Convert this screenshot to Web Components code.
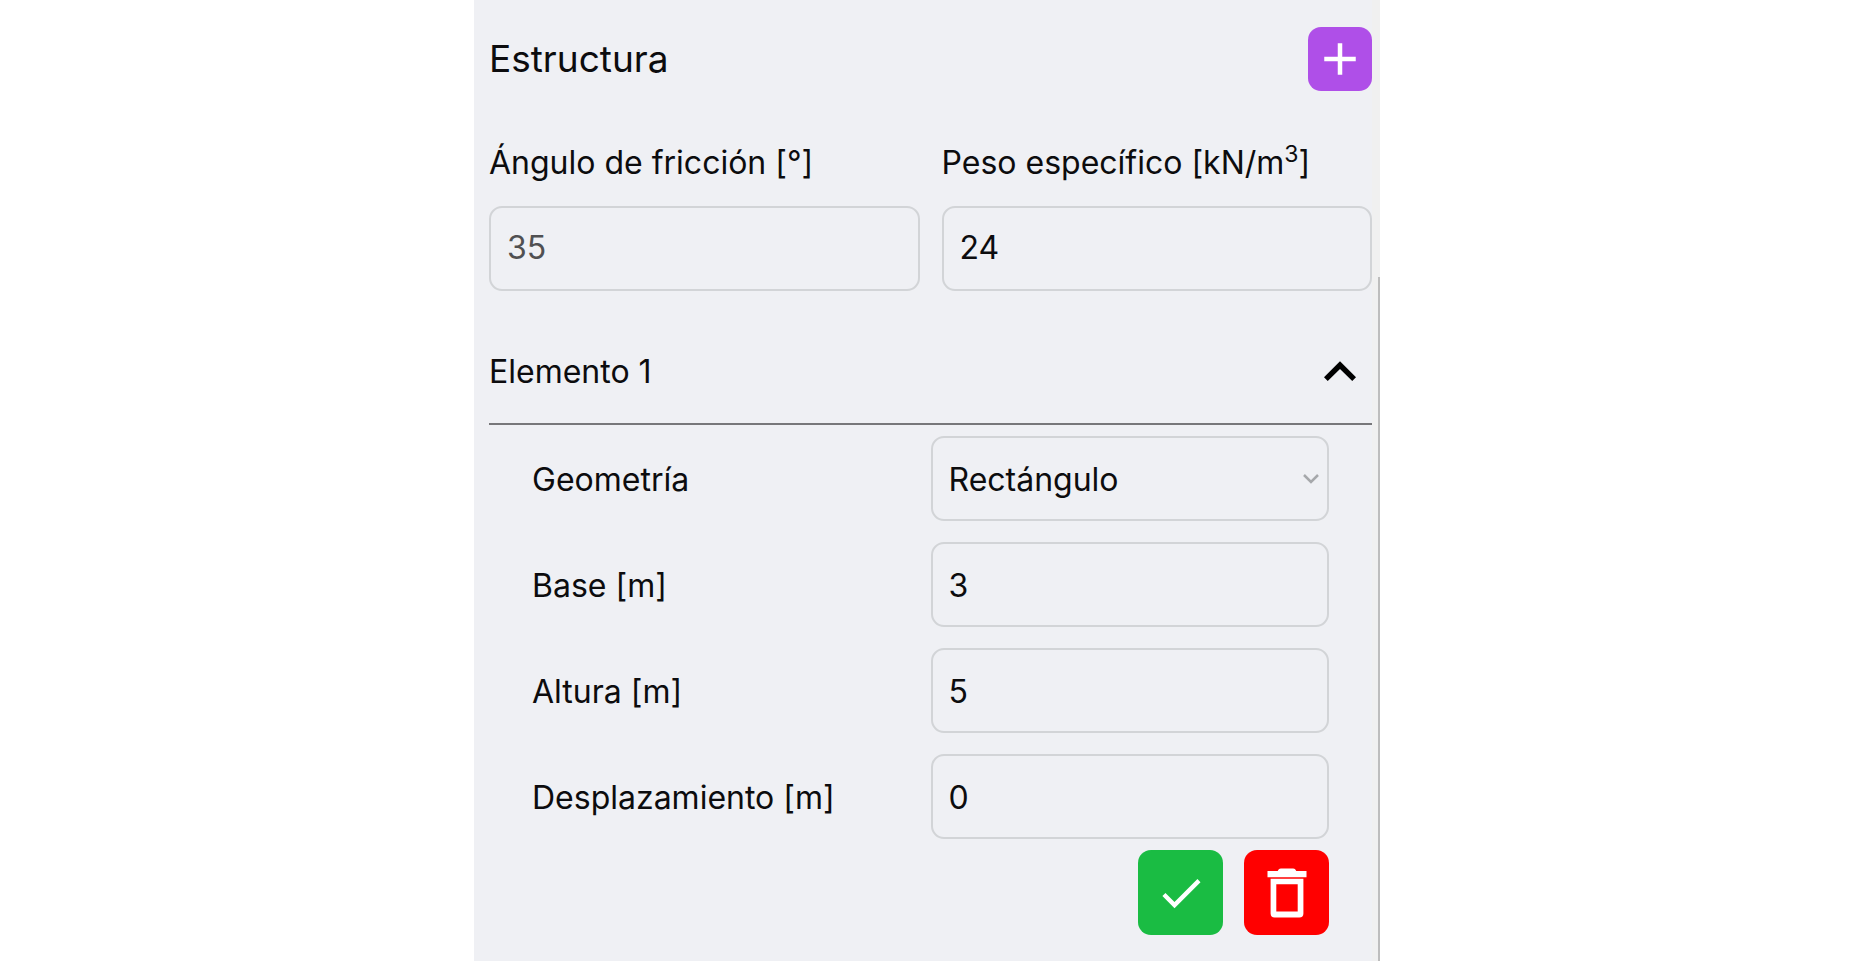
<!DOCTYPE html>
<html lang="es">
<head>
<meta charset="utf-8">
<meta name="viewport" content="width=device-width, initial-scale=1">
<title>Estructura</title>
<style>
  body { margin: 0; background: #fff; color: #0c0c0e; font-family: Inter, "Liberation Sans", sans-serif; font-size: 32px; line-height: 40px; }
</style>
</head>
<body>
<structure-panel></structure-panel>
<script>
const base = '*{box-sizing:border-box}button{font:inherit;color:inherit;border:0;padding:0;margin:0;cursor:pointer}';

const define = (name, html, setup) => customElements.define(name, class extends HTMLElement {
  constructor() {
    super();
    this.attachShadow({ mode: 'open' });
  }
  connectedCallback() {
    if (this.shadowRoot.childNodes.length) return;
    const t = document.createElement('template');
    t.innerHTML = html;
    this.shadowRoot.append(t.content.cloneNode(true));
    if (setup) setup(this, this.shadowRoot);
  }
});

const icons = {
  plus: '<svg width="54" height="54" viewBox="0 0 24 24"><path d="M19 13h-6v6h-2v-6H5v-2h6V5h2v6h6z"/></svg>',
  check: '<svg width="52" height="52" viewBox="0 0 24 24"><path d="M9 16.17 4.83 12l-1.42 1.41L9 19 21 7l-1.41-1.41z"/></svg>',
  trash: '<svg width="64" height="64" viewBox="0 0 64 64"><path d="M12.5 10h10.2c.8-1.7 1.7-2.500 3.200-2.500h12.200c1.500 0 2.400.8 3.200 2.500h10.200v6.200h-39z"/><path fill-rule="evenodd" d="M15.600 17.700h32.800V52.500a4 4 0 0 1-4 4H19.600a4 4 0 0 1-4-4zM21.300 23.200v27.200h21.400V23.200z"/></svg>'
};

/* Filled square button with an icon */
define('icon-button', `<style>${base}
  :host{display:block;flex:none;width:85px;height:85px}
  :host([size="small"]){width:64px;height:64px}
  button{display:grid;place-items:center;width:100%;height:100%;border-radius:13px;background:#af4fe8}
  :host([tone="ok"]) button{background:#1abc43}
  :host([tone="danger"]) button{background:#f00}
  svg{display:block;fill:#fff}
</style><button type="button"></button>`, (host, root) => {
  const b = root.querySelector('button');
  b.setAttribute('aria-label', host.getAttribute('label'));
  b.innerHTML = icons[host.getAttribute('icon')];
});

/* Labelled text box or drop-down; "inline" puts the label beside the control */
define('form-field', `<style>${base}
  :host{display:grid;row-gap:23px;min-width:0}
  :host([inline]){grid-template-columns:1fr 1fr;align-items:center}
  .box{display:grid;align-items:center;min-width:0}
  .box>*{grid-area:1/1}
  input,select{width:100%;height:85px;margin:0;padding:0 16px 2px;border:2px solid #d2d4d7;border-radius:13px;background:transparent;color:#0c0c0e;font:inherit;line-height:40px;outline:0;appearance:none}
  :host([inline]) :is(label,input,select){padding-top:2px;padding-bottom:0}
  input:disabled{color:#505052;opacity:1}
  svg{justify-self:end;margin-right:10px;pointer-events:none}
</style><label for="c"><slot></slot></label><div class="box"></div>`, (host, root) => {
  const box = root.querySelector('.box');
  const value = host.getAttribute('value');
  if (host.hasAttribute('options')) {
    box.innerHTML = `<select id="c">${host.getAttribute('options').split(',').map(o => `<option>${o}</option>`).join('')}</select>
      <svg width="16" height="10" viewBox="0 0 16 10" fill="none" stroke="#a6a8ab" stroke-width="2.500"><path d="M1 1l7 7 7-7"/></svg>`;
  } else {
    box.innerHTML = `<input id="c" type="text" inputmode="decimal" value="${value}"${host.hasAttribute('disabled') ? ' disabled' : ''}>`;
  }
});

/* Collapsible section */
define('element-section', `<style>${base}
  :host{display:block}
  .head{display:flex;justify-content:space-between;align-items:center;width:100%;height:104px;background:none;text-align:left;border-bottom:2px solid #77777a}
  .body{display:grid;gap:21px;padding:11px 43px 0}
  .body[hidden]{display:none}
  .head svg{display:block}
  .head[aria-expanded="false"] svg{transform:rotate(180deg)}
</style>
<button class="head" type="button" aria-expanded="true"><slot name="title"></slot>
<svg width="64" height="64" viewBox="0 0 24 24"><path d="m12 8-6 6 1.410 1.410L12 10.830l4.590 4.580L18 14z"/></svg></button>
<div class="body"><slot></slot></div>`, (host, root) => {
  const head = root.querySelector('.head'), body = root.querySelector('.body');
  head.addEventListener('click', () => {
    body.hidden = !body.hidden;
    head.setAttribute('aria-expanded', String(!body.hidden));
  });
});

define('structure-panel', `<style>${base}
  :host{display:flex;max-width:906px;min-height:100vh;margin:0 auto;background:#eff0f4}
  main{flex:1;min-width:0;padding:27px 0 27px 15px}
  header{display:flex;justify-content:space-between;align-items:center}
  h1{margin:0;font-size:37px;line-height:48px;font-weight:400}
  .pair{display:grid;grid-template-columns:1fr 1fr;gap:22px;margin-top:52px}
  sup{font-size:23px;line-height:0;vertical-align:super}
  element-section{margin-top:30px}
  .actions{display:flex;justify-content:flex-end;gap:21px;margin-top:-10px}
  .rail{display:flex;flex-direction:column;width:8px;background:#f0f0f0}
  .rail::before{content:"";flex:277}
  .rail::after{content:"";flex:684;margin-left:6px;background:#bdbdbd}
</style>
<main>
  <header><h1>Estructura</h1><icon-button size="small" icon="plus" label="Añadir elemento"></icon-button></header>
  <div class="pair">
    <form-field value="35" disabled>Ángulo de fricción [°]</form-field>
    <form-field value="24">Peso específico [kN/m<sup>3</sup>]</form-field>
  </div>
  <element-section>
    <span slot="title">Elemento 1</span>
    <form-field inline options="Rectángulo,Triángulo">Geometría</form-field>
    <form-field inline value="3">Base [m]</form-field>
    <form-field inline value="5">Altura [m]</form-field>
    <form-field inline value="0">Desplazamiento [m]</form-field>
    <div class="actions">
      <icon-button tone="ok" icon="check" label="Confirmar"></icon-button>
      <icon-button tone="danger" icon="trash" label="Eliminar"></icon-button>
    </div>
  </element-section>
</main>
<div class="rail"></div>`);
</script>
</body>
</html>
